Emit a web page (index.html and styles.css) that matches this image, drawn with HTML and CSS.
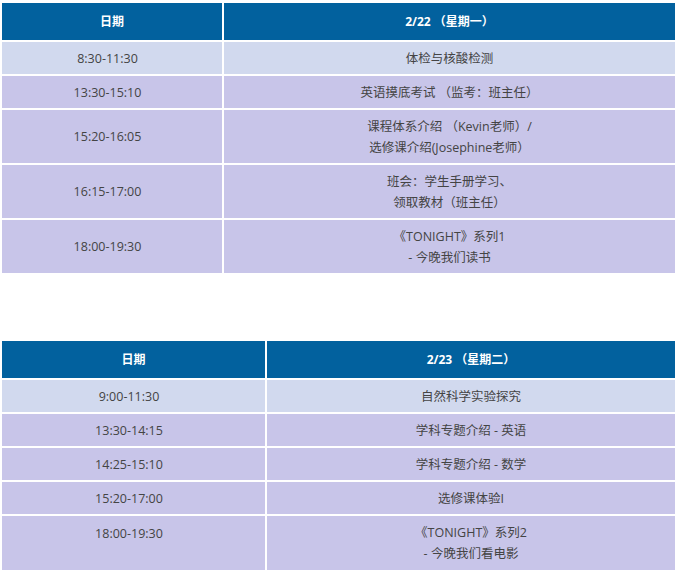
FILE: index.html
```html
<!DOCTYPE html>
<html lang="zh-CN">
<head>
<meta charset="utf-8">
<title>课程安排</title>
<link rel="stylesheet" href="styles.css">
</head>
<body>
<table class="sched sched-1">
  <colgroup><col class="c1"><col class="c2"></colgroup>
  <tr class="head"><th>日期</th><th>2/22 （星期一）</th></tr>
  <tr class="r-light one"><td class="time">8:30-11:30</td><td>体检与核酸检测</td></tr>
  <tr class="r-lav one"><td class="time">13:30-15:10</td><td>英语摸底考试 （监考：班主任）</td></tr>
  <tr class="r-lav two"><td class="time">15:20-16:05</td><td>课程体系介绍 （Kevin老师）/<br>选修课介绍(Josephine老师）</td></tr>
  <tr class="r-lav two"><td class="time">16:15-17:00</td><td>班会：学生手册学习、<br>领取教材（班主任）</td></tr>
  <tr class="r-lav two"><td class="time">18:00-19:30</td><td>《TONIGHT》系列1<br>- 今晚我们读书</td></tr>
</table>

<table class="sched sched-2">
  <colgroup><col class="c1"><col class="c2"></colgroup>
  <tr class="head"><th>日期</th><th>2/23 （星期二）</th></tr>
  <tr class="r-light one"><td class="time">9:00-11:30</td><td>自然科学实验探究</td></tr>
  <tr class="r-lav one"><td class="time">13:30-14:15</td><td>学科专题介绍 - 英语</td></tr>
  <tr class="r-lav one"><td class="time">14:25-15:10</td><td>学科专题介绍 - 数学</td></tr>
  <tr class="r-lav one"><td class="time">15:20-17:00</td><td>选修课体验I</td></tr>
  <tr class="r-lav two tall"><td class="time top">18:00-19:30</td><td>《TONIGHT》系列2<br>- 今晚我们看电影</td></tr>
</table>
</body>
</html>
```

FILE: styles.css
```css
html, body {
  margin: 0;
  padding: 0;
  background: #ffffff;
}

body {
  font-family: "Open Sans", "Noto Sans CJK SC", sans-serif;
  font-size: 12.5px;
  color: #444444;
}

.sched {
  border-collapse: separate;
  border-spacing: 2px;
  table-layout: fixed;
  width: 677px;
  margin: 1px 0 0 0;
}

.sched-2 {
  margin-top: 64px;
}

.sched-1 .c1 { width: 220px; }
.sched-2 .c1 { width: 263px; }

.sched th,
.sched td {
  padding: 0;
  text-align: center;
  vertical-align: middle;
  line-height: 21px;
}

.sched td.time {
  padding-right: 9px;
}

.head th {
  background: #02619e;
  color: #ffffff;
  font-weight: bold;
  font-size: 12px;
}

.head { height: 37px; }
.one { height: 32px; }
.two { height: 53px; }
.tall { height: 54px; }

.r-light td { background: #d1d9ee; }
.r-lav td { background: #c8c5e9; }

.sched td.top {
  vertical-align: top;
  padding-top: 7px;
}
```
